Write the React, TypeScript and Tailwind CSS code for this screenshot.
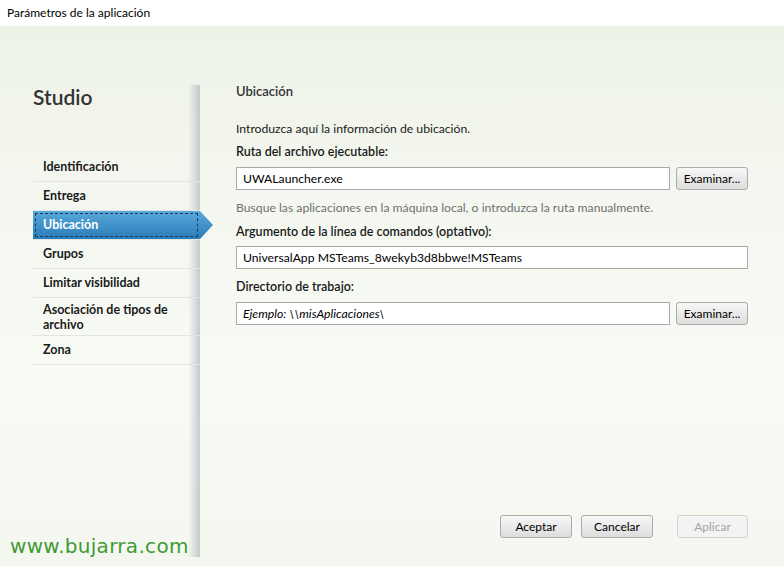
const navItems = [
  { label: "Identificación" },
  { label: "Entrega" },
  { label: "Ubicación", active: true },
  { label: "Grupos" },
  { label: "Limitar visibilidad" },
  { label: "Asociación de tipos de", second: "archivo" },
  { label: "Zona" },
];

const btn =
  "h-[23px] w-[72px] rounded-[3px] border border-[#acacac] bg-[linear-gradient(to_bottom,#f7f7f7,#dddddd)] text-[12px] text-black flex items-center justify-center";

const input =
  "h-[23px] border border-[#a9a9a9] bg-white px-[6px] text-[12.2px] text-black flex items-center";

const App = () => {
  return (
    <div className="w-[784px] h-[566px] flex flex-col overflow-hidden font-['Lato','Liberation_Sans',sans-serif] text-[#1a1a1a]">
      <div className="h-[26px] bg-white px-[7px] flex items-center text-[12px] text-black">
        Parámetros de la aplicación
      </div>

      <div className="relative flex-1 flex bg-[linear-gradient(to_bottom,#edf2e7,#f4f7ef_30%,#f8faf5_65%,#f4f7ef)]">
        {/* left column */}
        <div className="w-[200px] flex flex-col pt-[59px] pb-[9px]">
          <div className="flex-1 bg-[linear-gradient(to_right,rgba(200,205,210,0)_calc(100%-12px),rgba(185,190,196,0.8))]">
            <div className="pl-[33px] h-[24px] flex items-center text-[21px] font-semibold text-[#333]">
              Studio
            </div>
            <div className="mt-[44px] ml-[33px] w-[167px] flex flex-col">
              {navItems.map((item) =>
                item.active ? (
                  <div
                    key={item.label}
                    className="relative h-[29px] bg-[linear-gradient(to_bottom,#5aa9da,#2a7bba)] text-white font-bold text-[12.5px] flex items-center pl-[10px] border-b border-[#e3e3e3]"
                  >
                    <div className="absolute inset-[2px] border border-dashed border-[#1b3a55]" />
                    {item.label}
                    <svg
                      className="absolute -right-[13px] top-0"
                      width="13"
                      height="28"
                      viewBox="0 0 13 28"
                    >
                      <defs>
                        <linearGradient id="ag" x1="0" y1="0" x2="0" y2="1">
                          <stop offset="0" stopColor="#5aa9da" />
                          <stop offset="1" stopColor="#2a7bba" />
                        </linearGradient>
                      </defs>
                      <polygon points="0,0 13,14 0,28" fill="url(#ag)" />
                    </svg>
                  </div>
                ) : (
                  <div
                    key={item.label}
                    className={`${
                      item.second ? "h-[38px] leading-[15px]" : "h-[29px]"
                    } border-b border-[#e3e3e3] flex flex-col justify-center pl-[10px] font-bold text-[12.5px] text-[#1a1a1a]`}
                  >
                    <span>{item.label}</span>
                    {item.second && <span>{item.second}</span>}
                  </div>
                )
              )}
            </div>
          </div>
        </div>

        {/* right column */}
        <div className="flex-1 flex flex-col pl-[36px] pr-[36px] pt-[57px] pb-[28px] text-[12.2px] leading-[16px]">
          <div className="text-[13px] font-semibold text-[#333]">Ubicación</div>
          <div className="mt-[22px]">Introduzca aquí la información de ubicación.</div>
          <div className="mt-[7px] font-semibold text-[12.5px]">Ruta del archivo ejecutable:</div>
          <div className="mt-[7px] flex gap-[6px]">
            <div className={`${input} flex-1`}>UWALauncher.exe</div>
            <button className={btn}>Examinar...</button>
          </div>
          <div className="mt-[10px] text-[#707070]">
            Busque las aplicaciones en la máquina local, o introduzca la ruta manualmente.
          </div>
          <div className="mt-[8px] font-semibold text-[12.5px]">
            Argumento de la línea de comandos (optativo):
          </div>
          <div className={`${input} mt-[6px]`}>UniversalApp MSTeams_8wekyb3d8bbwe!MSTeams</div>
          <div className="mt-[10px] font-semibold text-[12.5px]">Directorio de trabajo:</div>
          <div className="mt-[7px] flex gap-[6px]">
            <div className={`${input} flex-1 italic text-[#6d6d6d]`}>Ejemplo: \\misAplicaciones\</div>
            <button className={btn}>Examinar...</button>
          </div>

          <div className="mt-auto flex">
            <button className={`${btn} ml-auto w-[71px]`}>Aceptar</button>
            <button className={`${btn} ml-[9px] w-[71px]`}>Cancelar</button>
            <button className="ml-[24px] h-[23px] w-[71px] rounded-[3px] border border-[#d3d3d3] bg-[#f3f3f3] text-[12px] text-[#a3a3a3] flex items-center justify-center">
              Aplicar
            </button>
          </div>
        </div>

        <div className="absolute left-[10px] bottom-[9px] text-[20px] leading-[22px] tracking-[0.3px] text-[#3f9a34] font-['DejaVu_Sans',sans-serif]">
          www.bujarra.com
        </div>
      </div>
    </div>
  );
};

export default App;
